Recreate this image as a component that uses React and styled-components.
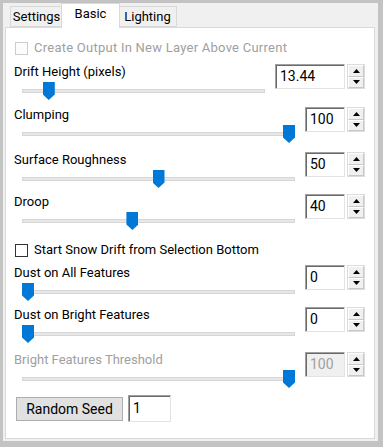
import React from "react";
import styled, { createGlobalStyle } from "styled-components";

const GlobalStyle = createGlobalStyle`
  html, body {
    margin: 0;
    padding: 0;
    background: #c3c3c3;
  }
  body {
    font-family: Roboto, "Liberation Sans", sans-serif;
    font-size: 13px;
  }
`;

const sliders = [
  { label: "Drift Height (pixels)", value: "13.44", pos: 0.09, wide: true, mt: 8 },
  { label: "Clumping", value: "100", pos: 1, mt: 5 },
  { label: "Surface Roughness", value: "50", pos: 0.5, mt: 7 },
  { label: "Droop", value: "40", pos: 0.4, mt: 4 },
];

const dust = [
  { label: "Dust on All Features", value: "0", pos: 0, mt: 7 },
  { label: "Dust on Bright Features", value: "0", pos: 0, mt: 4 },
  { label: "Bright Features Threshold", value: "100", pos: 1, mt: 7, disabled: true },
];

const Arrow = ({ up }) => (
  <svg width="7" height="4" viewBox="0 0 7 4">
    <path d={up ? "M0 4 L3.5 0 L7 4 Z" : "M0 0 L3.5 4 L7 0 Z"} fill="#000" />
  </svg>
);

const SliderRow = ({ label, value, pos, wide, mt, disabled }) => (
  <Row $mt={mt}>
    <LeftCol>
      <Label $disabled={disabled}>{label}</Label>
      <SliderArea>
        <Track />
        <Thumb style={{ left: `calc(${pos} * (100% - 12px))` }} />
      </SliderArea>
    </LeftCol>
    <Spin>
      <SpinInput $wide={wide} $disabled={disabled}>
        {value}
      </SpinInput>
      <SpinButtons>
        <SpinButton>
          <Arrow up />
        </SpinButton>
        <SpinButton>
          <Arrow />
        </SpinButton>
      </SpinButtons>
    </Spin>
  </Row>
);

const App = () => {
  return (
    <>
      <GlobalStyle />
      <Frame>
        <Inner>
          <TabStrip>
            <Tab $w={53}>Settings</Tab>
            <Tab $w={59} $active>
              Basic
            </Tab>
            <Tab $w={59}>Lighting</Tab>
          </TabStrip>
          <Panel>
            <CheckRow $mt={0}>
              <CheckBox $disabled />
              <CheckText $disabled>Create Output In New Layer Above Current</CheckText>
            </CheckRow>
            {sliders.map((s) => (
              <SliderRow key={s.label} {...s} />
            ))}
            <CheckRow $mt={10}>
              <CheckBox />
              <CheckText>Start Snow Drift from Selection Bottom</CheckText>
            </CheckRow>
            {dust.map((s) => (
              <SliderRow key={s.label} {...s} />
            ))}
            <SeedRow>
              <SeedButton>Random Seed</SeedButton>
              <SeedInput>1</SeedInput>
            </SeedRow>
          </Panel>
        </Inner>
      </Frame>
    </>
  );
};

export default App;

const Frame = styled.div`
  width: 383px;
  height: 447px;
  box-sizing: border-box;
  padding: 3px 5px 6px 3px;
  background: #c3c3c3;
`;

const Inner = styled.div`
  height: 100%;
  background: #f0f0f0;
  display: flex;
  flex-direction: column;
  padding: 0 3px 2px 2px;
  box-sizing: border-box;
`;

const TabStrip = styled.div`
  height: 24px;
  display: flex;
  align-items: flex-end;
  padding-left: 5px;
`;

const Tab = styled.div`
  position: relative;
  z-index: ${(p) => (p.$active ? 2 : 1)};
  box-sizing: border-box;
  width: ${(p) => p.$w}px;
  height: ${(p) => (p.$active ? "25px" : "21px")};
  margin-bottom: ${(p) => (p.$active ? "-1px" : "0")};
  margin-left: ${(p) => (p.$active ? "-2px" : "0")};
  margin-right: ${(p) => (p.$active ? "-2px" : "0")};
  padding-top: 2px;
  text-align: center;
  background: ${(p) => (p.$active ? "#fff" : "#f0f0f0")};
  border: 1px solid #d9d9d9;
  border-bottom: ${(p) => (p.$active ? "none" : "1px solid #d9d9d9")};
  color: #000;
  line-height: 16px;
  white-space: nowrap;
`;

const Panel = styled.div`
  position: relative;
  z-index: 1;
  flex: 1;
  background: #fff;
  border: 1px solid #d9d9d9;
  padding: 12px 9px 0 8px;
  display: flex;
  flex-direction: column;
`;

const CheckRow = styled.div`
  display: flex;
  align-items: center;
  gap: 6px;
  height: 16px;
  margin-top: ${(p) => p.$mt}px;
  padding-left: 1px;
`;

const CheckBox = styled.div`
  width: 13px;
  height: 13px;
  box-sizing: border-box;
  border: 1px solid ${(p) => (p.$disabled ? "#cccccc" : "#333333")};
  background: ${(p) => (p.$disabled ? "#fcfcfc" : "#fff")};
`;

const CheckText = styled.span`
  color: ${(p) => (p.$disabled ? "#a0a0a0" : "#000")};
  line-height: 16px;
  white-space: nowrap;
  letter-spacing: ${(p) => (p.$disabled ? "0.25px" : "0")};
`;

const Row = styled.div`
  display: flex;
  align-items: flex-start;
  gap: 10px;
  margin-top: ${(p) => p.$mt}px;
`;

const LeftCol = styled.div`
  flex: 1;
  min-width: 0;
`;

const Label = styled.div`
  height: 16px;
  line-height: 16px;
  white-space: nowrap;
  color: ${(p) => (p.$disabled ? "#a0a0a0" : "#000")};
`;

const SliderArea = styled.div`
  position: relative;
  height: 22px;
  margin-left: 8px;
`;

const Track = styled.div`
  position: absolute;
  left: 0;
  right: 0;
  top: 9px;
  height: 4px;
  box-sizing: border-box;
  background: #e7e7e7;
  border: 1px solid #d6d6d6;
`;

const Thumb = styled.div`
  position: absolute;
  top: 2px;
  width: 12px;
  height: 18px;
  background: #0078d7;
  clip-path: polygon(0 0, 100% 0, 100% 70%, 50% 100%, 0 70%);
`;

const Spin = styled.div`
  display: flex;
  gap: 2px;
  height: 25px;
`;

const SpinInput = styled.div`
  width: ${(p) => (p.$wide ? "70px" : "40px")};
  box-sizing: border-box;
  height: 25px;
  border-top: 1px solid #a0a0a0;
  border-left: 1px solid #a0a0a0;
  border-right: 1px solid #e3e3e3;
  border-bottom: 1px solid #e3e3e3;
  box-shadow: inset 1px 1px 0 #696969;
  background: ${(p) => (p.$disabled ? "#f0f0f0" : "#fff")};
  color: ${(p) => (p.$disabled ? "#a0a0a0" : "#000")};
  font-size: 14px;
  line-height: 23px;
  padding-left: 4px;
`;

const SpinButtons = styled.div`
  width: 18px;
  height: 25px;
  display: flex;
  flex-direction: column;
  box-sizing: border-box;
  border: 1px solid #dcdcdc;
  background: #f0f0f0;
`;

const SpinButton = styled.div`
  flex: 1;
  display: flex;
  align-items: center;
  justify-content: center;
  border: 1px solid #fff;
  border-right-color: #c8c8c8;
  border-bottom-color: #c8c8c8;
`;

const SeedRow = styled.div`
  display: flex;
  align-items: center;
  gap: 5px;
  margin-top: 5px;
  padding-left: 2px;
`;

const SeedButton = styled.div`
  width: 107px;
  height: 24px;
  box-sizing: border-box;
  background: #e1e1e1;
  border: 1px solid #adadad;
  display: flex;
  align-items: center;
  justify-content: center;
  font-size: 14px;
  color: #000;
`;

const SeedInput = styled.div`
  width: 43px;
  height: 27px;
  box-sizing: border-box;
  border-top: 1px solid #a0a0a0;
  border-left: 1px solid #a0a0a0;
  border-right: 1px solid #e3e3e3;
  border-bottom: 1px solid #e3e3e3;
  box-shadow: inset 1px 1px 0 #696969;
  background: #fff;
  font-size: 14px;
  line-height: 25px;
  padding-left: 4px;
`;
